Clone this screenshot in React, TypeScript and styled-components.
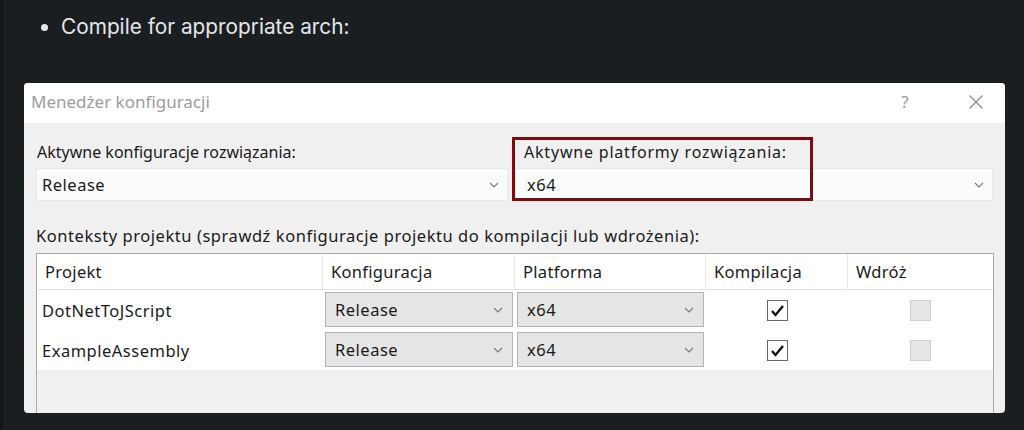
import { createGlobalStyle, styled } from 'styled-components';

const GlobalStyle = createGlobalStyle`
  html, body {
    margin: 0;
    padding: 0;
    background: #1b1e21;
  }
  * { box-sizing: border-box; }
`;

const Page = styled.div`
  width: 1024px;
  height: 430px;
  overflow: hidden;
  background: #1b1e21;
  border-left: 3px solid #131517;
  padding: 0 19px 0 21px;
`;

const Bullets = styled.ul`
  margin: 0;
  padding: 15px 0 0 37px;
  height: 83px;
  list-style: none;
  li {
    position: relative;
    font-family: Inter, "Liberation Sans", sans-serif;
    font-size: 20.8px;
    line-height: 24px;
    color: #e4e6e8;
    &::before {
      content: '';
      position: absolute;
      left: -20px;
      top: 9px;
      width: 7px;
      height: 7px;
      border-radius: 50%;
      background: #e4e6e8;
    }
  }
`;

const Dialog = styled.div`
  width: 981px;
  height: 330px;
  border-radius: 4px;
  overflow: hidden;
  background: #f0f0f0;
  display: flex;
  flex-direction: column;
  font-family: "Noto Sans", "Open Sans", sans-serif;
  color: #1a1a1a;
`;

const TitleBar = styled.div`
  height: 40px;
  background: #fff;
  display: flex;
  align-items: center;
  padding: 0 14px 3px 7px;
  color: #9c9c9c;
  font-size: 17px;
  span.title { flex: 1; }
`;

const TitleButton = styled.span`
  width: 30px;
  display: flex;
  justify-content: center;
  font-size: 17px;
  margin-left: ${(p: { gap?: number }) => p.gap ?? 0}px;
`;

const Body = styled.div`
  flex: 1;
  padding: 19px 11px 0 12px;
  display: flex;
  flex-direction: column;
  min-height: 0;
`;

const TopGrid = styled.div`
  display: grid;
  grid-template-columns: 472px 478px;
  column-gap: 7px;
`;

const Field = styled.div`
  position: relative;
  display: flex;
  flex-direction: column;
  gap: 6px;
`;

const Label = styled.div<{ $indent?: number; $spacing?: number }>`
  font-size: 16px;
  line-height: 20px;
  padding-left: ${(p) => p.$indent ?? 0}px;
  letter-spacing: ${(p) => p.$spacing ?? 0}px;
`;

const Highlight = styled.div`
  position: absolute;
  left: -3px;
  top: -5px;
  width: 301px;
  height: 64px;
  border: 3px solid #7d0c10;
  pointer-events: none;
`;

const Select = styled.div<{ $boxed?: boolean; $indent?: number }>`
  height: ${(p) => (p.$boxed ? 35 : 33)}px;
  display: flex;
  align-items: center;
  justify-content: space-between;
  padding: 0 ${(p) => (p.$boxed ? 9 : 8)}px 0 ${(p) => p.$indent ?? (p.$boxed ? 9 : 5)}px;
  background: ${(p) => (p.$boxed ? '#e5e5e5' : '#fbfbfb')};
  border: 1px solid ${(p) => (p.$boxed ? '#b4b4b4' : '#e8e8e8')};
  font-size: 16.5px;
  letter-spacing: 0.5px;
`;

const Contexts = styled(Label)`
  font-size: 16.5px;
  margin-top: 25px;
  margin-bottom: 7px;
`;

const Table = styled.div`
  flex: 1;
  width: 958px;
  border: 1px solid #a9a9a9;
  border-bottom: none;
  background: #f0f0f0;
`;

const Row = styled.div<{ $header?: boolean }>`
  display: grid;
  grid-template-columns: 286px 192px 191px 142px 1fr;
  height: ${(p) => (p.$header ? 36 : 40)}px;
  background: #fff;
  border-bottom: ${(p) => (p.$header ? '1px solid #e3e3e3' : 'none')};
`;

const HeadCell = styled.div`
  display: flex;
  align-items: center;
  padding-left: 8px;
  font-size: 16.5px;
  letter-spacing: 0.3px;
  border-right: 1px solid #e6e6e6;
  &:last-child { border-right: none; }
`;

const Cell = styled.div<{ $center?: boolean }>`
  display: flex;
  align-items: center;
  justify-content: ${(p) => (p.$center ? 'center' : 'flex-start')};
  padding: ${(p) => (p.$center ? '0' : '0 0 0 5px')};
  font-size: 16.5px;
  letter-spacing: 0.5px;
`;

const SelectCell = styled.div`
  padding: 2px;
`;

const Check = styled.div<{ $disabled?: boolean }>`
  width: 21px;
  height: 21px;
  display: flex;
  align-items: center;
  justify-content: center;
  background: ${(p) => (p.$disabled ? '#e6e6e6' : '#fff')};
  border: 1px solid ${(p) => (p.$disabled ? '#cfcfcf' : '#6a6a6a')};
`;

function Chevron() {
  return (
    <svg width="10" height="6" viewBox="0 0 10 6">
      <polyline points="1,1 5,5 9,1" fill="none" stroke="#7a7a7a" strokeWidth="1.1" />
    </svg>
  );
}

function Tick() {
  return (
    <svg width="15" height="13" viewBox="0 0 15 13">
      <polyline points="2,7 5.5,11 13,2" fill="none" stroke="#111" strokeWidth="2.4" />
    </svg>
  );
}

const projects = ['DotNetToJScript', 'ExampleAssembly'];

export default function App() {
  return (
    <Page>
      <GlobalStyle />
      <Bullets>
        <li>Compile for appropriate arch:</li>
      </Bullets>
      <Dialog>
        <TitleBar>
          <span className="title">Menedżer konfiguracji</span>
          <TitleButton>?</TitleButton>
          <TitleButton gap={41}>
            <svg width="16" height="16" viewBox="0 0 16 16">
              <path d="M1.5 1.5 L14.5 14.5 M14.5 1.5 L1.5 14.5" stroke="#8a8a8a" strokeWidth="1.2" />
            </svg>
          </TitleButton>
        </TitleBar>
        <Body>
          <TopGrid>
            <Field>
              <Label $indent={1}>Aktywne konfiguracje rozwiązania:</Label>
              <Select>
                Release
                <Chevron />
              </Select>
            </Field>
            <Field>
              <Label $indent={9} $spacing={0.8}>Aktywne platformy rozwiązania:</Label>
              <Select $indent={11}>
                x64
                <Chevron />
              </Select>
              <Highlight />
            </Field>
          </TopGrid>
          <Contexts $spacing={0.55}>
            Konteksty projektu (sprawdź konfiguracje projektu do kompilacji lub wdrożenia):
          </Contexts>
          <Table>
            <Row $header>
              <HeadCell>Projekt</HeadCell>
              <HeadCell>Konfiguracja</HeadCell>
              <HeadCell>Platforma</HeadCell>
              <HeadCell>Kompilacja</HeadCell>
              <HeadCell>Wdróż</HeadCell>
            </Row>
            {projects.map((name) => (
              <Row key={name}>
                <Cell>{name}</Cell>
                <SelectCell>
                  <Select $boxed>
                    Release
                    <Chevron />
                  </Select>
                </SelectCell>
                <SelectCell>
                  <Select $boxed>
                    x64
                    <Chevron />
                  </Select>
                </SelectCell>
                <Cell $center>
                  <Check>
                    <Tick />
                  </Check>
                </Cell>
                <Cell $center>
                  <Check $disabled />
                </Cell>
              </Row>
            ))}
          </Table>
        </Body>
      </Dialog>
    </Page>
  );
}
